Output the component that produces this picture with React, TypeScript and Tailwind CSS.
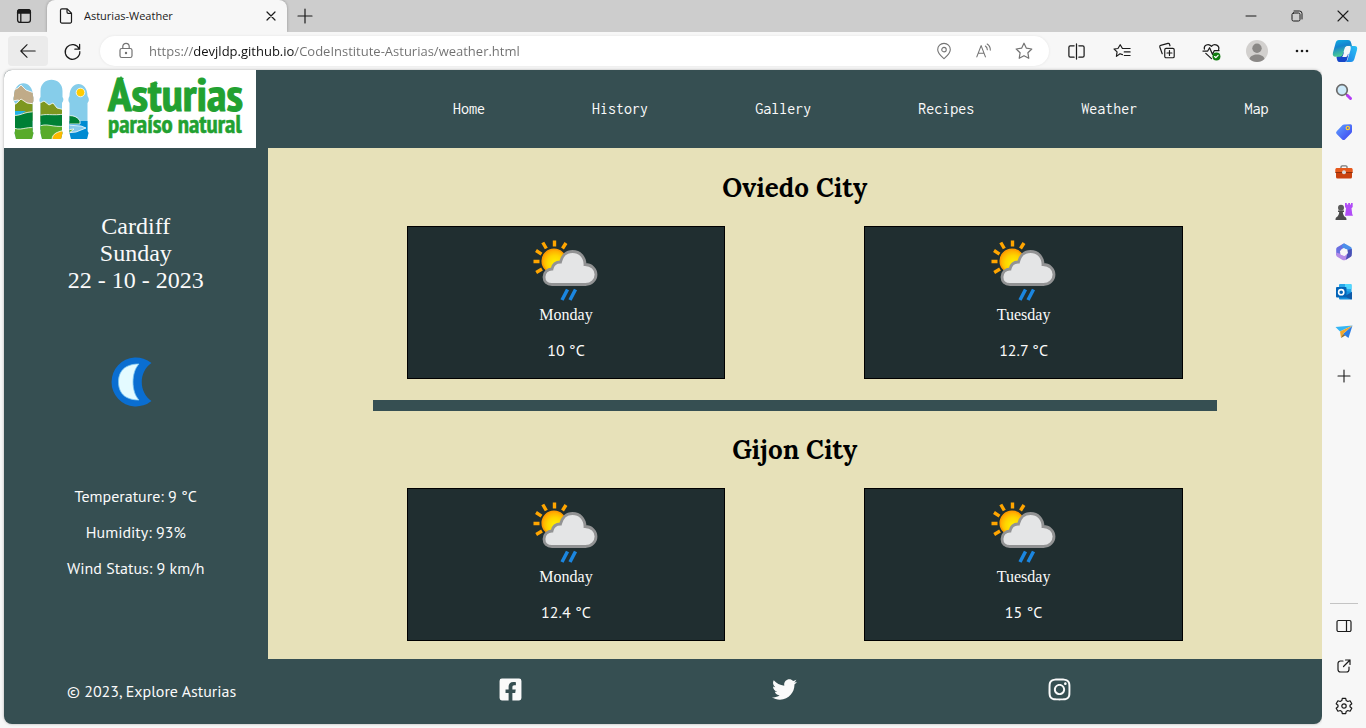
import type { ReactNode } from "react";
import { FaFacebookSquare, FaInstagram, FaTwitter } from "react-icons/fa";

const stroke = {
  fill: "none",
  stroke: "currentColor",
  strokeLinecap: "round" as const,
  strokeLinejoin: "round" as const,
};

function IconButton({ label, className, children }: { label: string; className: string; children: ReactNode }) {
  return (
    <button type="button" aria-label={label} className={`flex shrink-0 items-center justify-center ${className}`}>
      {children}
    </button>
  );
}

function Line({ d, size = 20, width = 1.2 }: { d: string; size?: number; width?: number }) {
  return (
    <svg width={size} height={size} viewBox="0 0 20 20" strokeWidth={width} {...stroke}>
      <path d={d} />
    </svg>
  );
}

const STAR = "M10 2.2l2.4 5 5.4.8-3.9 3.8.9 5.5-4.8-2.6-4.8 2.6.9-5.5L2.200 8l5.400-.8z";

function TitleBar() {
  return (
    <div className="flex h-8 bg-[#cdcdcd] text-[#1b1b1b]">
      <IconButton label="Tab actions" className="w-[47px]">
        <svg width="16" height="16" viewBox="0 0 16 16" {...stroke} strokeWidth="1.3">
          <rect x="1.600" y="1.600" width="12.800" height="12.800" rx="2.400" />
          <path d="M1.600 4.500V4a2.400 2.400 0 0 1 2.400-2.400h8A2.400 2.400 0 0 1 14.400 4v1H1.600z" fill="currentColor" />
          <path d="M4.800 5v9" />
        </svg>
      </IconButton>
      <div className="flex w-60 items-center rounded-t-lg bg-[#f7f7f7] pl-3 pr-2 shadow-[0_0_3px_rgba(0,0,0,0.3)]">
        <svg width="14" height="16" viewBox="0 0 14 16" {...stroke} strokeWidth="1.2">
          <path d="M3 .8h5.200l4.300 4.300v8.600a1.400 1.400 0 0 1-1.400 1.400H2.900a1.400 1.400 0 0 1-1.400-1.400V2.200A1.400 1.400 0 0 1 2.900.8zM8 .8v3.200a1.300 1.300 0 0 0 1.300 1.300h3.200" />
        </svg>
        <span className="ml-[11px] flex-1 truncate text-[11px]">Asturias-Weather</span>
        <IconButton label="Close tab" className="size-4">
          <Line d="M5 5l10 10M15 5L5 15" size={16} width={1.5} />
        </IconButton>
      </div>
      <IconButton label="New tab" className="w-9">
        <Line d="M10 3v14M3 10h14" width={1.2} />
      </IconButton>
      <div className="ml-auto flex">
        <IconButton label="Minimize" className="w-[46px]">
          <Line d="M5 10h10" width={1} />
        </IconButton>
        <IconButton label="Restore" className="w-[46px]">
          <Line d="M6.500 7h5A1.500 1.500 0 0 1 13 8.500v5A1.500 1.500 0 0 1 11.500 15h-5A1.500 1.500 0 0 1 5 13.500v-5A1.500 1.500 0 0 1 6.500 7zM7 5h5.500A2.500 2.500 0 0 1 15 7.500V13" width={1} />
        </IconButton>
        <IconButton label="Close" className="w-[46px]">
          <Line d="M5 5l10 10M15 5L5 15" width={1.1} />
        </IconButton>
      </div>
    </div>
  );
}

function CopilotIcon() {
  return (
    <svg width="26" height="24" viewBox="0 0 26 24">
      <defs>
        <linearGradient id="cpA" x1="0" y1="0" x2="0.300" y2="1">
          <stop offset="0" stopColor="#0fb1e4" />
          <stop offset="0.450" stopColor="#1583cf" />
          <stop offset="1" stopColor="#4ed08f" />
        </linearGradient>
        <linearGradient id="cpB" x1="0" y1="1" x2="1" y2="0">
          <stop offset="0" stopColor="#1c7fe8" />
          <stop offset="1" stopColor="#2bc3f4" />
        </linearGradient>
      </defs>
      <path d="M7.500 23c-2 0-2.500-2-3-5l6-5 6 2-1.500 6c-.5 1.500-1.500 2-3 2z" fill="#1647c8" />
      <path d="M7 1h9c2 0 2.700 1.200 3.200 3l.8 3h-4c-2 0-3 1-3.500 2.800L11 15c-.6 2-1.600 2.700-3.300 2.700H3.500C1 17.700.4 16 1 13.500L3.600 4C4.200 2 5.200 1 7 1z" fill="url(#cpA)" />
      <path d="M18 7h4.500c2.500 0 3.100 1.600 2.500 4l-2.600 9c-.6 2-1.600 3-3.400 3h-6c1.600-.2 2.300-1.200 2.700-2.700L18.500 11c.5-2 .3-3.500-.5-4z" fill="url(#cpB)" />
      <path d="M16 7h1.200c.6 1 .5 2.500 0 4l-1.700 5.500c-.4 1-1.200 1.500-2.500 1.500h-3c.7-.6 1-1.600 1.300-2.600l1.500-5C13.300 8.500 14.300 7 16 7z" fill="#f7f7f7" />
    </svg>
  );
}

function ToolBar() {
  return (
    <div className="flex h-[38px] items-center bg-[#f7f7f7] pl-2 text-[#1b1b1b]">
      <IconButton label="Back" className="h-[30px] w-10 rounded-sm bg-[#ebebeb]">
        <Line d="M18 10H2M9 3l-7 7 7 7" size={18} width={1.2} />
      </IconButton>
      <IconButton label="Refresh" className="ml-1 h-[30px] w-10">
        <Line d="M17 7.200A7.700 7.700 0 1 0 17.700 10M17.500 2.500v5h-5" width={1.300} size={19} />
      </IconButton>
      <div className="ml-2 flex h-[30px] flex-1 items-center rounded-full bg-white pl-4 pr-[5px] text-[#737373] shadow-[0_0_3px_rgba(0,0,0,0.08)]">
        <svg width="20" height="20" viewBox="0 0 20 20" {...stroke} strokeWidth="1.200">
          <rect x="4" y="7.500" width="12" height="9" rx="1.800" />
          <path d="M6.800 7.500V5.500a3.200 3.200 0 0 1 6.400 0v2" />
          <circle cx="10" cy="12" r="0.600" fill="currentColor" />
        </svg>
        <input
          type="text"
          aria-label="Address"
          defaultValue="https://devjldp.github.io/CodeInstitute-Asturias/weather.html"
          className="ml-[13px] min-w-0 flex-1 bg-[linear-gradient(90deg,#6f6f6f_45px,#111_45px,#111_146px,#6f6f6f_146px)] bg-clip-text pt-px text-[13px] text-transparent outline-none"
        />
        <IconButton label="Location" className="w-10">
          <svg width="18" height="18" viewBox="0 0 20 20" {...stroke} strokeWidth="1.200">
            <path d="M10 18.500c-3-2.800-7-6-7-10a7 7 0 0 1 14 0c0 4-4 7.200-7 10z" />
            <circle cx="10" cy="8.500" r="2.500" />
          </svg>
        </IconButton>
        <IconButton label="Read aloud" className="w-10">
          <Line d="M2 16.500L6.800 4l4.800 12.500M3.700 12.500h6.300M11.500 4.500c1.500 1 2.200 2.400 2.200 4.200M13.500 2.200c2.500 1.600 3.600 3.800 3.500 6.800" width={1.2} size={18} />
        </IconButton>
        <IconButton label="Add to favorites" className="w-10">
          <Line d={STAR} size={20} />
        </IconButton>
      </div>
      <div className="ml-[5px] flex">
        <IconButton label="Split screen" className="w-[45px]">
          <Line d="M10 2v16M7.500 4h-4A1.500 1.500 0 0 0 2 5.500v9A1.500 1.500 0 0 0 3.500 16h4M12.500 4h4A1.500 1.500 0 0 1 18 5.500v9a1.500 1.500 0 0 1-1.500 1.500h-4" size={19} width={1.3} />
        </IconButton>
        <IconButton label="Favorites" className="w-[45px]">
          <Line d="M10.500 14L7.800 13 3.800 16l.7-5L1.200 7.800l4.300-.6L8 3l2.500 4.200H19M12.500 11H19M12.500 15H19" size={18} width={1.3} />
        </IconButton>
        <IconButton label="Collections" className="w-[45px]">
          <Line d="M9 7h7.500A1.500 1.500 0 0 1 18 8.500V16a1.500 1.500 0 0 1-1.500 1.500H9A1.500 1.500 0 0 1 7.500 16V8.500A1.500 1.500 0 0 1 9 7zM12.750 9.500v5.500M10 12.250h5.500M4.700 13L2 5.500A1.500 1.500 0 0 1 3 3.700l8-2.200a1.500 1.500 0 0 1 1.800 1l.5 1.700" size={18} width={1.3} />
        </IconButton>
        <IconButton label="Browser essentials" className="w-[45px]">
          <svg width="19" height="19" viewBox="0 0 20 20" {...stroke} strokeWidth="1.300">
            <path d="M2.500 7.500C1.600 3.500 6.500.8 10 4.500 13.500.8 18.800 3.800 17.500 8M1 9.500h5l2-3.500 3 7 2-4h5M4 12l6 5.500" />
            <circle cx="15.200" cy="15.200" r="4.200" fill="#107c10" stroke="none" />
            <path d="M13.300 15.300l1.300 1.200 2.300-2.500" stroke="#fff" />
          </svg>
        </IconButton>
        <IconButton label="Profile" className="w-[45px]">
          <svg width="22" height="22" viewBox="0 0 22 22">
            <circle cx="11" cy="11" r="11" fill="#d2d0ce" />
            <circle cx="11" cy="8.200" r="4.700" fill="#8a8886" />
            <path d="M3.500 19c1-6 14-6 15 0-4 4-11 4-15 0z" fill="#8a8886" />
          </svg>
        </IconButton>
        <IconButton label="Settings and more" className="w-[45px]">
          <svg width="14" height="4" viewBox="0 0 14 4" fill="currentColor">
            <circle cx="2" cy="2" r="1.300" />
            <circle cx="7" cy="2" r="1.300" />
            <circle cx="12" cy="2" r="1.300" />
          </svg>
        </IconButton>
      </div>
      <IconButton label="Copilot" className="w-[42px]">
        <CopilotIcon />
      </IconButton>
    </div>
  );
}

function EdgeSidebar() {
  return (
    <aside className="flex w-11 shrink-0 flex-col items-center bg-[#f7f7f7] py-0.5 text-[#1b1b1b]">
      <IconButton label="Search" className="h-10 w-11">
        <svg width="18" height="18" viewBox="0 0 18 18" fill="none">
          <path d="M11 11l2 2" stroke="#666" strokeWidth="2" />
          <path d="M12.500 12.500l3 3" stroke="#b43cf5" strokeWidth="3" strokeLinecap="round" />
          <circle cx="7" cy="7" r="5.300" fill="#cdeafa" stroke="#6b6b6b" strokeWidth="1.700" />
        </svg>
      </IconButton>
      <IconButton label="Shopping" className="h-10 w-11">
        <svg width="18" height="18" viewBox="0 0 18 18">
          <defs>
            <linearGradient id="tag" x1="0" y1="0" x2="1" y2="1">
              <stop offset="0" stopColor="#62a4ff" />
              <stop offset="1" stopColor="#3b3ff0" />
            </linearGradient>
          </defs>
          <path d="M9 1.500l6.500-.3a1.500 1.500 0 0 1 1.500 1.500V8.500a2 2 0 0 1-.6 1.400L10 16.400a2 2 0 0 1-2.800 0L1.700 11a2 2 0 0 1 0-2.800L7.600 2.100A2 2 0 0 1 9 1.500z" fill="url(#tag)" />
          <circle cx="12.800" cy="5" r="1.600" fill="#4c5ddc" stroke="#ffd22e" strokeWidth="1.300" />
        </svg>
      </IconButton>
      <IconButton label="Tools" className="h-10 w-11">
        <svg width="18" height="18" viewBox="0 0 18 18">
          <path d="M6 6V4a1.200 1.200 0 0 1 1.200-1.200h3.600A1.200 1.200 0 0 1 12 4v2" fill="none" stroke="#777" strokeWidth="1.300" />
          <rect x="1" y="5" width="16" height="10.500" rx="1.500" fill="#c9410e" />
          <path d="M.3 6.500A1.500 1.500 0 0 1 1.800 5h14.400a1.500 1.500 0 0 1 1.500 1.500V9H.3z" fill="#e6581b" />
          <path d="M.3 9h17.400v1H.3z" fill="#8e2f0a" />
          <circle cx="9" cy="9.300" r="2" fill="#d8d8d8" />
        </svg>
      </IconButton>
      <IconButton label="Games" className="h-10 w-11">
        <svg width="18" height="18" viewBox="0 0 18 18">
          <path d="M10 0h1.800v1.500h1.400V0h1.800v1.500h1V0H17.700v4l-1.200 1.200.7 5.800.8 1.800H10l.3-2 .8-5.600L10 4z" fill="#b14cf7" />
          <circle cx="6" cy="4.700" r="3" fill="#5a5a5a" />
          <path d="M3 7.500h6v1.500H7.800c.2 2.500 1 4 2.400 5 1 .7 1.300 1.300 1.300 3H.5c0-1.700.3-2.300 1.300-3 1.400-1 2.200-2.500 2.400-5H3z" fill="#4b4b4b" />
        </svg>
      </IconButton>
      <IconButton label="Microsoft 365" className="h-10 w-11">
        <svg width="18" height="18" viewBox="0 0 18 18">
          <path d="M9 .3L2.200 4.200Q1.200 4.800 1.200 6v6.200l4.600-1.700V7l5.800-3.500L9.600.4z" fill="#6a6fe0" />
          <path d="M7.500 1.200Q9 .2 10.500 1l5.300 3.100q1 .6 1 1.800v5L12.300 9V7L7 4z" fill="#4b8fea" />
          <path d="M1.200 9.500V12q0 1.200 1 1.800l5.300 3.100q1.500.8 3 0l5.300-3.100-3.500-3.300L9 12.700l-3.200-1.800z" fill="#b58be8" />
          <path d="M16.800 6v6q0 1.200-1 1.800l-5 3 1.500-6V7z" fill="#4a50b5" />
          <path d="M8 5.200l4.300 1.200.6 3.600L9.800 13l-4-1.200-.9-3.600z" fill="#f7f7f7" />
        </svg>
      </IconButton>
      <IconButton label="Outlook" className="h-10 w-11">
        <svg width="18" height="18" viewBox="0 0 18 18">
          <path d="M4 2a1 1 0 0 1 1-1h10.500a1 1 0 0 1 1 1v7H4z" fill="#28a8ea" />
          <path d="M10 1h5.500a1 1 0 0 1 1 1v4H10z" fill="#50d9ff" />
          <path d="M4 8h7l6 1v6.500a1 1 0 0 1-1 1H5a1 1 0 0 1-1-1z" fill="#1490df" />
          <path d="M17 9l-8 4.500 7.500 3a1 1 0 0 0 .5-1z" fill="#0f5aa8" />
          <rect x="1" y="4" width="10.500" height="10.500" rx="1" fill="#0364b8" />
          <circle cx="6.200" cy="9.200" r="2.600" fill="none" stroke="#fff" strokeWidth="1.600" />
        </svg>
      </IconButton>
      <IconButton label="Drop" className="h-10 w-11">
        <svg width="18" height="18" viewBox="0 0 18 18">
          <path d="M.5 4l17-1.500-12.500 6z" fill="#35b6f4" />
          <path d="M17.500 2.500L13.500 15l-5.500-4z" fill="#2b7de4" />
          <path d="M5 8.500L17.500 2.500 8 11l-2 4z" fill="#f2a72b" />
          <path d="M6 15l2-4 2.200 1.500z" fill="#8a6a2c" />
        </svg>
      </IconButton>
      <IconButton label="Customize" className="mt-1 h-10 w-11">
        <Line d="M10 4v12M4 10h12" width={1.1} />
      </IconButton>
      <hr className="mt-auto mb-0.5 w-7 border-[#c4c4c4]" />
      <IconButton label="Toggle sidebar" className="h-10 w-11">
        <Line d="M4.500 4.500h11A1.500 1.500 0 0 1 17 6v8a1.500 1.500 0 0 1-1.500 1.500h-11A1.500 1.500 0 0 1 3 14V6a1.500 1.500 0 0 1 1.500-1.500zM12.500 4.500v11" />
      </IconButton>
      <IconButton label="Open in new window" className="h-10 w-11">
        <Line d="M9 5H6.500A2.500 2.500 0 0 0 4 7.500v6A2.500 2.500 0 0 0 6.500 16h6a2.500 2.500 0 0 0 2.500-2.500V11M11.500 4H16v4.500M16 4l-6.500 6.500" />
      </IconButton>
      <IconButton label="Sidebar settings" className="h-10 w-11">
        <svg width="20" height="20" viewBox="0 0 20 20" {...stroke} strokeWidth="1.200">
          <path d="M8.300 2.300h3.400l.5 2.300 1.600.9 2.300-.7 1.700 2.900-1.800 1.600v1.400l1.800 1.600-1.700 2.900-2.300-.7-1.600.9-.5 2.300H8.300l-.5-2.300-1.600-.9-2.300.7-1.700-2.900L4 10.700V9.300L2.200 7.700l1.700-2.900 2.300.7 1.600-.9z" />
          <circle cx="10" cy="10" r="2.200" />
        </svg>
      </IconButton>
    </aside>
  );
}

const MINI_STAR = "M0-3.200l.9 2 2.200.2-1.700 1.500.5 2.200L0 1.500l-1.900 1.200.5-2.200L-3.100-1l2.200-.2z";

function AsturiasLogo() {
  return (
    <svg width="252" height="78" viewBox="0 0 252 78" role="img" aria-label="Asturias, paraíso natural">
      <defs>
        <clipPath id="w1">
          <path d="M10 26c0-17 19-17 19 0 1.500 3 1 5-.5 7V61l1 2-1.500 6H12l-1.500-6 .5-2V33c-1.500-2-2-4-1-7z" />
        </clipPath>
        <clipPath id="w2">
          <path d="M36.500 21c0-15 22-15 22 0v6c1.500 2 1 4-.5 6v28l.5 2-1.500 6H38l-1.500-6V33c-1.500-2-1.500-4 0-6z" />
        </clipPath>
        <clipPath id="w3">
          <path d="M65.500 26c0-16 18-16 18 0 2 3 1.500 5 0 7v28l1 2-1.500 6H67l-1.500-6V33c-1.500-2-1.500-4 0-7z" />
        </clipPath>
      </defs>
      <g clipPath="url(#w1)" stroke="#fff" strokeWidth="0.800">
        <path d="M8 10h23v60H8z" fill="#86cdea" stroke="none" />
        <path d="M8 21l6-3 3-3 5 5 8 3v11l-10-1-6-3-6 1z" fill="#c0ab88" />
        <path d="M8 36l5-3 4-4 6 4 8 1v17H8z" fill="#7d971f" />
        <path d="M8 41h14l-6 4H8z" fill="#22b2e6" stroke="none" />
        <path d="M8 45c8 2 12-4 23-3v19H8z" fill="#008035" />
        <path d="M8 57c8 5 14-1 23 1v14H8z" fill="#59ab2b" />
      </g>
      <g clipPath="url(#w2)" stroke="#fff" strokeWidth="0.800">
        <path d="M34 8h27v62H34z" fill="#86cdea" stroke="none" />
        <path d="M34 34l6-3 5 4 4-2 4 5 8 2v12H34z" fill="#7d971f" />
        <path d="M34 46c8-3 14 0 27-2v16H34z" fill="#008035" />
        <path d="M34 57c8-5 15 1 27-1v16H34z" fill="#59ab2b" />
        <path d="M48 70c0-7 6-8 13-10v11z" fill="#fdb900" />
      </g>
      <g clipPath="url(#w3)" stroke="#fff" strokeWidth="0.800">
        <path d="M62 10h25v60H62z" fill="#86cdea" stroke="none" />
        <circle cx="76.500" cy="22.500" r="4.300" fill="#fc0" />
        <path d="M62 51h25v20H62z" fill="#008bd2" stroke="none" />
        <path d="M62 46c6-1 11 0 14 5v3H62z" fill="#008035" />
        <path d="M62 55l15 1 5 2-10 4-10 1z" fill="#86c9ea" />
        <path d="M62 60l8-1-6 5z" fill="#59ab2b" />
      </g>
      <g fill="#22a131" stroke="#22a131" fontWeight="700" strokeLinejoin="round">
        <text x="104" y="41" fontSize="47" strokeWidth="1" className="font-['PT_Sans_Narrow','PT_Sans',sans-serif]">Asturias</text>
        <text x="104" y="63" fontSize="25" strokeWidth="0.500" className="font-['PT_Sans_Narrow','PT_Sans',sans-serif]">paraíso natural</text>
      </g>
      <g fill="#22a131">
        <path transform="translate(117 9)" d={MINI_STAR} />
        <path transform="translate(151 14)" d={MINI_STAR} />
      </g>
    </svg>
  );
}

function RainCloud() {
  return (
    <svg width="66" height="64" viewBox="0 0 66 64" role="img" aria-label="Partly cloudy with rain" className="mx-auto">
      <defs>
        <radialGradient id="sun" cx="0.550" cy="0.600" r="0.600">
          <stop offset="0" stopColor="#fff200" />
          <stop offset="0.550" stopColor="#ffd400" />
          <stop offset="1" stopColor="#ffa300" />
        </radialGradient>
      </defs>
      <path d="M21.500 1.500v6M9.800 3.500l3.500 6M33 4l-3.500 5.500M3 11.500l5.500 3.600M.5 22.500h6M3.200 33.500l5.800-3.500" stroke="#ffa500" strokeWidth="3.400" />
      <circle cx="21" cy="22" r="11.800" fill="url(#sun)" stroke="#ff9d00" strokeWidth="1.500" />
      <path d="M19 45.500c-5 0-8-3-8-7.500 0-4.600 3.500-8 8-8 1-5 4.500-7 8.500-7 1.500-6.500 6-10.500 12-10.500 7.500 0 12.500 5.500 12.500 13 6.500 0 11 4.500 11 10 0 5.500-4.500 10-10.500 10z" fill="#e4e5e6" stroke="#929394" strokeWidth="2.800" />
      <path d="M34.500 50.500L29 61M42.500 50.500L37 61" stroke="#1b86e0" strokeWidth="3.500" />
    </svg>
  );
}

function Moon() {
  return (
    <svg width="64" height="64" viewBox="0 0 64 64" role="img" aria-label="Clear night" className="mx-auto mt-14">
      <path d="M47.500 13A24.500 24.500 0 1 0 47.500 51C34.500 42 34.500 22 47.500 13z" fill="#0a6ed1" />
      <path d="M35 14C20 14 14.500 22 14.500 32S20 50 35 50C27 42 27 22 35 14z" fill="#e4fbff" stroke="#7cc6f2" strokeWidth="0.800" />
    </svg>
  );
}

interface Forecast {
  day: string;
  temp: string;
}

function City({ name, days }: { name: string; days: Forecast[] }) {
  return (
    <section>
      <h2 className="text-center font-['Lora','Liberation_Serif',serif] text-[26px] leading-8 font-bold text-black">{name}</h2>
      <div className="mt-[22px] flex justify-evenly">
        {days.map((f) => (
          <article key={f.day} className="w-[30.2%] border border-black bg-[#202e30] pt-3 pb-4 text-center">
            <RainCloud />
            <p className="font-['Liberation_Serif',serif] text-base leading-6">{f.day}</p>
            <p className="mt-[11px] leading-6">{f.temp}</p>
          </article>
        ))}
      </div>
    </section>
  );
}

function WeatherPage() {
  return (
    <div className="mb-1 ml-1 flex min-w-0 flex-1 flex-col overflow-hidden rounded-lg bg-[#364f52] font-['PT_Sans','Lato',sans-serif] text-base text-[#fafafa] shadow-[0_0_3px_rgba(0,0,0,0.3)]">
      <header className="flex justify-between">
        <a href="#home" className="bg-white">
          <AsturiasLogo />
        </a>
        <nav className="flex w-[70%] items-center justify-around font-['Inconsolata','Liberation_Mono',monospace] text-base">
          {["Home", "History", "Gallery", "Recipes", "Weather", "Map"].map((item) => (
            <a key={item} href={`#${item.toLowerCase()}`}>
              {item}
            </a>
          ))}
        </nav>
      </header>
      <div className="flex flex-1">
        <aside className="w-1/5 pt-[65px] text-center">
          <div className="font-['Liberation_Serif',serif] text-2xl leading-[27px]">
            <p>Cardiff</p>
            <p>Sunday</p>
            <p>22 - 10 - 2023</p>
          </div>
          <Moon />
          <div className="mt-[70px] flex flex-col gap-3 leading-6">
            <p>Temperature: 9 °C</p>
            <p>Humidity: 93%</p>
            <p>Wind Status: 9 km/h</p>
          </div>
        </aside>
        <main className="flex-1 bg-[#e7e1b9] pt-6 pb-[18px]">
          <City name="Oviedo City" days={[{ day: "Monday", temp: "10 °C" }, { day: "Tuesday", temp: "12.7 °C" }]} />
          <hr className="mx-auto mt-[21px] mb-[23px] h-[11px] w-4/5 border-0 bg-[#364f52]" />
          <City name="Gijon City" days={[{ day: "Monday", temp: "12.4 °C" }, { day: "Tuesday", temp: "15 °C" }]} />
        </main>
      </div>
      <footer className="flex h-[65px] items-center pb-0.5">
        <p className="w-[28%] pl-[63px]">© 2023, Explore Asturias</p>
        <div className="flex w-[62.5%] justify-around pb-0.5">
          <a href="#facebook" aria-label="Facebook">
            <FaFacebookSquare size={25} />
          </a>
          <a href="#twitter" aria-label="Twitter">
            <FaTwitter size={25} />
          </a>
          <a href="#instagram" aria-label="Instagram">
            <FaInstagram size={25} />
          </a>
        </div>
      </footer>
    </div>
  );
}

export default function App() {
  return (
    <div className="flex min-h-screen flex-col bg-[#f7f7f7] font-['Segoe_UI','Open_Sans',sans-serif]">
      <TitleBar />
      <ToolBar />
      <div className="flex flex-1">
        <WeatherPage />
        <EdgeSidebar />
      </div>
    </div>
  );
}
